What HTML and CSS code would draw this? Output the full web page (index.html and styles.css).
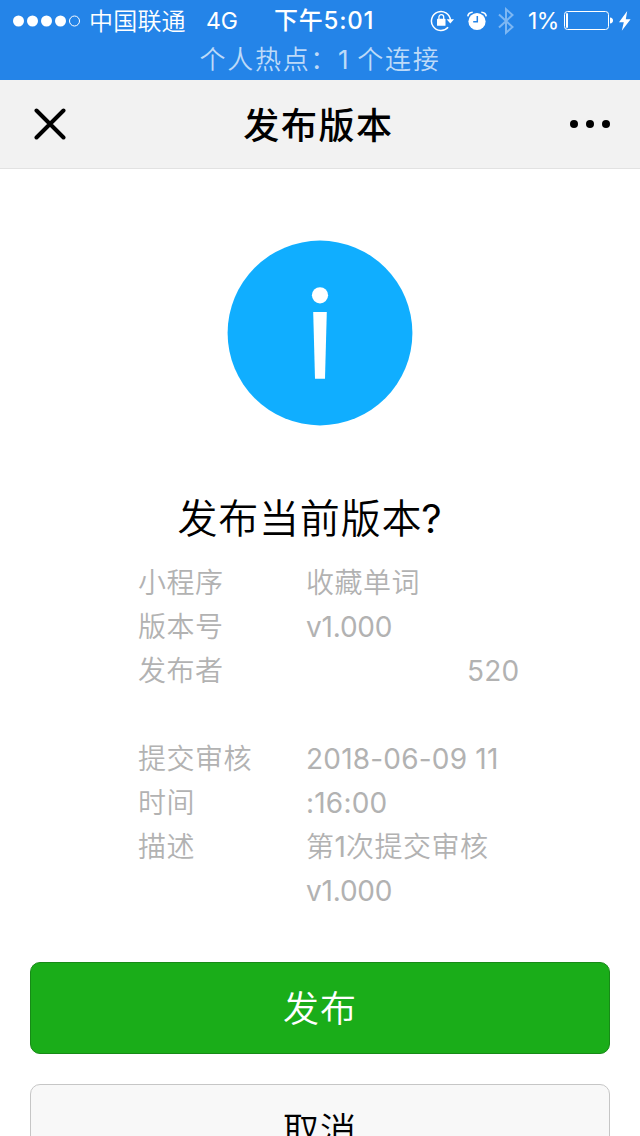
FILE: index.html
```html
<!DOCTYPE html>
<html lang="zh-CN">
<head>
    <meta charset="UTF-8">
    <meta name="viewport" content="width=device-width, initial-scale=1.0">
    <title>发布版本</title>
    <link rel="stylesheet" href="styles.css">
</head>
<body>
    <header class="status">
        <div class="status-bar">
            <svg class="signal" width="68" height="12" viewBox="0 0 68 12">
                <g fill="#fff">
                    <circle cx="5.5" cy="6" r="5.5"/>
                    <circle cx="19.5" cy="6" r="5.5"/>
                    <circle cx="33.5" cy="6" r="5.5"/>
                    <circle cx="47.5" cy="6" r="5.5"/>
                </g>
                <circle cx="61.5" cy="6" r="5" fill="none" stroke="#fff"/>
            </svg>
            <span class="carrier">中国联通</span>
            <span class="network">4G</span>
            <span class="time">下午5:01</span>
            <div class="status-icons">
                <svg width="24" height="22" viewBox="0 0 24 22">
                    <path d="M18.1 17.3A9.5 9.5 0 1 1 20.4 10" fill="none" stroke="#fff" stroke-width="1.5"/>
                    <path d="M16.6 9.3H24L20.3 13.6z" fill="#fff"/>
                    <rect x="7" y="8.8" width="8.5" height="7" rx=".6" fill="#fff"/>
                    <path d="M8.9 9.3V7.1a2.4 2.4 0 0 1 4.8 0v2.2" fill="none" stroke="#fff" stroke-width="1.3"/>
                </svg>
                <svg class="alarm" width="20" height="20" viewBox="0 0 20 20">
                    <circle cx="10" cy="10.5" r="8.6" fill="#fff"/>
                    <path d="M.8 5.3Q1.3 1.5 5.7 1.2M19.2 5.3Q18.7 1.5 14.3 1.2" fill="none" stroke="#fff" stroke-width="1.6"/>
                    <path d="M10.3 5v5.7H6.2" fill="none" stroke="#2484e8" stroke-width="1.5"/>
                </svg>
                <svg class="bluetooth" width="16" height="28" viewBox="0 0 16 28">
                    <path d="M1 7.5L14.5 20 8 25.8V2.2L14.5 8 1 20.5" fill="none" stroke="#7db7f3" stroke-width="2"/>
                </svg>
                <span class="percent">1%</span>
                <svg class="battery" width="50" height="20" viewBox="0 0 50 20">
                    <rect x=".5" y=".5" width="44" height="18" rx="3" fill="none" stroke="#fff"/>
                    <rect x="2" y="2" width="2" height="15" rx="1" fill="#fff"/>
                    <path d="M46 6.5q3 .3 3 3t-3 3z" fill="#fff"/>
                </svg>
                <svg class="bolt" width="12" height="20" viewBox="0 0 12 20">
                    <path d="M8.2 0L0 11.2H4.8L2.8 19.7 11.6 8.2H6.8z" fill="#fff"/>
                </svg>
            </div>
        </div>
        <div class="hotspot">个人热点：<span class="count">1</span>个连接</div>
    </header>

    <nav class="navbar">
        <svg width="32" height="32" viewBox="0 0 32 32">
            <path d="M2.5 2.5l27 27M29.5 2.5l-27 27" stroke="#000" stroke-width="4" stroke-linecap="round"/>
        </svg>
        <h1>发布版本</h1>
        <svg width="40" height="8" viewBox="0 0 40 8">
            <circle cx="4" cy="4" r="4"/>
            <circle cx="20" cy="4" r="4"/>
            <circle cx="36" cy="4" r="4"/>
        </svg>
    </nav>

    <main class="content">
        <svg class="info-icon" width="186" height="186" viewBox="0 0 186 186">
            <circle cx="93" cy="93" r="92.4" fill="#10aeff"/>
            <circle cx="93" cy="55.3" r="8.1" fill="#fff"/>
            <path d="M86.2 72h13.6l-1.8 66.8H88z" fill="#fff"/>
        </svg>
        <h2>发布当前版本<span class="mark">?</span></h2>
        <dl class="details">
            <dt>小程序</dt>
            <dd>收藏单词</dd>
            <dt>版本号</dt>
            <dd class="latin">v1.000</dd>
            <dt>发布者</dt>
            <dd class="latin publisher">520</dd>
            <dt>提交审核时间</dt>
            <dd class="latin date">2018-06-09 11<br>:16:00</dd>
            <dt>描述</dt>
            <dd>第<span class="latin date">1</span>次提交审核<br><span class="latin">v1.000</span></dd>
        </dl>
        <div class="actions">
            <button class="btn btn-primary">发布</button>
            <button class="btn btn-default">取消</button>
        </div>
    </main>
</body>
</html>
```
FILE: styles.css
```css
* {
    box-sizing: border-box;
}
html, body {
    height: 1136px;
    overflow: hidden;
}
body {
    margin: 0;
    background-color: #fff;
    color: #000;
    font-family: Inter, "Noto Sans CJK SC", sans-serif;
}
svg {
    display: block;
    flex: none;
}
h1, h2, dl, dd {
    margin: 0;
}
.status {
    height: 80px;
    background-color: #2484e8;
    color: #fff;
}
.status-bar {
    display: flex;
    align-items: center;
    height: 41px;
    padding-left: 13px;
    font-size: 23px;
    line-height: 40px;
    white-space: nowrap;
}
.carrier {
    width: 118px;
    padding-top: 2px;
    padding-left: 8px;
    font-size: 24px;
    font-weight: 350;
    letter-spacing: 0.2px;
}
.network {
    width: 68px;
    padding-left: 7px;
}
.time {
    width: 163px;
    padding-top: 1px;
    padding-left: 7px;
    font-size: 24px;
    font-weight: 500;
    letter-spacing: 0.8px;
}
.status-icons {
    display: flex;
    align-items: center;
}
.alarm {
    margin-left: 13px;
}
.bluetooth {
    margin-left: 11px;
}
.percent {
    width: 35px;
    margin-left: 14px;
    letter-spacing: -0.6px;
}
.battery {
    margin-left: 1px;
}
.bolt {
    margin-left: 5px;
}
.hotspot {
    padding-top: 1px;
    font-size: 26px;
    font-weight: 350;
    line-height: 36px;
    letter-spacing: 1.7px;
    text-align: center;
    color: #bddaf8;
}
.count {
    margin-right: 7px;
    font-weight: 400;
}
.navbar {
    display: flex;
    align-items: center;
    justify-content: space-between;
    height: 89px;
    padding: 0 30px 0 34px;
    background-color: #f2f2f2;
    border-bottom: 1px solid #e2e2e2;
}
.navbar h1 {
    padding: 4px 0 0 1px;
    font-size: 36px;
    font-weight: 500;
    line-height: 84px;
    letter-spacing: 1.6px;
}
.content {
    display: flex;
    flex-direction: column;
    padding: 71px 30px 0;
}
.info-icon {
    align-self: center;
}
.content h2 {
    margin-top: 65px;
    padding-right: 20px;
    font-size: 40px;
    font-weight: 350;
    line-height: 56px;
    letter-spacing: 0.8px;
    text-align: center;
}
.mark {
    margin-left: -1px;
    font-weight: 400;
}
.details {
    display: grid;
    grid-template-columns: 120px 220px;
    column-gap: 48px;
    margin-top: 14px;
    padding-left: 108px;
    color: #b2b2b2;
    font-size: 28px;
    font-weight: 350;
    line-height: 44px;
    letter-spacing: 0.5px;
}
.latin {
    font-weight: 400;
    letter-spacing: -0.2px;
}
.date {
    letter-spacing: 0.2px;
}
.publisher {
    min-height: 88px;
    padding-left: 161px;
    letter-spacing: 0.2px;
}
.actions {
    display: flex;
    flex-direction: column;
    gap: 30px;
    margin-top: 49px;
}
.btn {
    height: 92px;
    padding: 2px 0 0;
    border: 1px solid #178a17;
    border-radius: 10px;
    font-family: inherit;
    font-size: 36px;
    font-weight: 350;
    line-height: 88px;
    letter-spacing: 1px;
}
.btn-primary {
    background-color: #1aad19;
    color: #fff;
}
.btn-default {
    border-color: #c6c6c6;
    background-color: #f8f8f8;
    color: #000;
}
```
